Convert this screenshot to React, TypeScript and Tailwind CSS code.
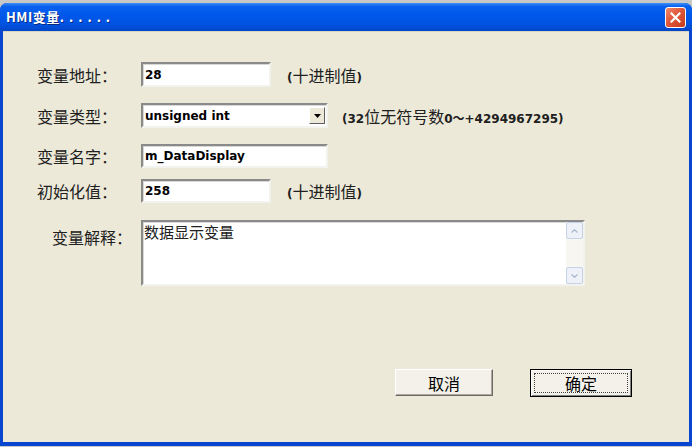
import React from "react";

const cjk = { fontFamily: '"SimSun","Noto Sans CJK SC","Liberation Sans",sans-serif' };
const bold = { fontFamily: '"DejaVu Sans","Liberation Sans","Noto Sans CJK SC",sans-serif' };

function Sunken({ className, children }: { className: string; children?: React.ReactNode }) {
  return (
    <div
      className={
        "bg-white border-2 border-t-[#8a8a8a] border-l-[#8a8a8a] border-b-[#f2f2ee] border-r-[#f2f2ee] shadow-[inset_1px_1px_0_#d8d8d4] " +
        className
      }
    >
      {children}
    </div>
  );
}

function Label({ text, className = "" }: { text: string; className?: string }) {
  return (
    <div className={"w-[104px] shrink-0 text-[16px] text-[#202020] " + className} style={cjk}>
      {text}
    </div>
  );
}

export default function App() {
  return (
    <div className="w-[692px] h-[447px] bg-[#c8c8c8] pt-[3px] overflow-hidden">
      <div className="w-[692px] h-[443px] flex flex-col rounded-t-[7px] overflow-hidden bg-[#0846d0]">
        {/* title bar */}
        <div className="h-[28px] shrink-0 flex items-center justify-between pl-[6px] pr-[6px] bg-[linear-gradient(to_bottom,#3d8ef7_0%,#0862ee_12%,#0058ea_40%,#0053e2_75%,#0046c8_100%)]">
          <div
            className="text-white text-[13px] font-bold tracking-[0.5px] [text-shadow:1px_1px_0_#0a2a80]"
            style={cjk}
          >
            HMI变量<span className="tracking-[5px]">......</span>
          </div>
          <div className="w-[21px] h-[21px] rounded-[3px] border border-white bg-[linear-gradient(135deg,#f08a6a_0%,#e0573a_45%,#c43b1c_100%)] flex items-center justify-center mt-[1px]">
            <svg width="11" height="11" viewBox="0 0 11 11">
              <path d="M1.5 1.5 L9.5 9.5 M9.5 1.5 L1.5 9.5" stroke="white" strokeWidth="2.2" strokeLinecap="square" />
            </svg>
          </div>
        </div>
        {/* body */}
        <div className="flex-1 mx-[3px] mb-[4px] bg-[#ece9d8] border-t border-[#d8d4c4] flex flex-col pl-[34px]">
          {/* row 1 */}
          <div className="flex items-center mt-[30px] h-[25px]">
            <Label text="变量地址：" />
            <Sunken className="w-[130px] h-[25px] flex items-center pl-[2px]">
              <span className="text-[12px] font-bold text-black" style={bold}>28</span>
            </Sunken>
            <span className="ml-[16px] text-[16px] text-[#202020]" style={cjk}>
              <b className="text-[12px]" style={bold}>(</b>十进制值<b className="text-[12px]" style={bold}>)</b>
            </span>
          </div>
          {/* row 2 */}
          <div className="flex items-center mt-[16px] h-[25px]">
            <Label text="变量类型：" />
            <Sunken className="w-[187px] h-[25px] flex items-center justify-between pl-[2px] pr-[1px]">
              <span className="text-[12px] font-bold text-black" style={bold}>unsigned int</span>
              <div className="w-[16px] h-[17px] bg-[#ece9d8] border border-t-white border-l-white border-b-[#606060] border-r-[#606060] flex items-center justify-center">
                <svg width="7" height="4" viewBox="0 0 7 4">
                  <path d="M0 0 H7 L3.5 4 Z" fill="black" />
                </svg>
              </div>
            </Sunken>
            <span className="ml-[14px] text-[16px] text-[#202020] whitespace-nowrap" style={cjk}>
              <b className="text-[12px]" style={bold}>(32</b>位无符号数<b className="text-[12px]" style={bold}>0～+4294967295)</b>
            </span>
          </div>
          {/* row 3 */}
          <div className="flex items-center mt-[16px] h-[24px]">
            <Label text="变量名字：" />
            <Sunken className="w-[187px] h-[24px] flex items-center pl-[2px]">
              <span className="text-[12px] font-bold text-black" style={bold}>m_DataDisplay</span>
            </Sunken>
          </div>
          {/* row 4 */}
          <div className="flex items-center mt-[11px] h-[24px]">
            <Label text="初始化值：" />
            <Sunken className="w-[130px] h-[24px] flex items-center pl-[2px]">
              <span className="text-[12px] font-bold text-black" style={bold}>258</span>
            </Sunken>
            <span className="ml-[16px] text-[16px] text-[#202020]" style={cjk}>
              <b className="text-[12px]" style={bold}>(</b>十进制值<b className="text-[12px]" style={bold}>)</b>
            </span>
          </div>
          {/* row 5 */}
          <div className="flex items-start mt-[17px]">
            <Label text="变量解释：" className="pl-[15px] mt-[5px]" />
            <Sunken className="w-[444px] h-[66px] flex">
              <div className="flex-1 text-[15px] leading-[18px] text-[#202020] pl-[1px] pt-[1px]" style={cjk}>
                数据显示变量
              </div>
              <div className="w-[17px] h-full bg-[#f7f6f1] flex flex-col justify-between">
                <div className="w-[17px] h-[17px] rounded-[2px] bg-[#eef1f8] border border-[#c6d2e8] flex items-center justify-center">
                  <svg width="7" height="4" viewBox="0 0 7 4">
                    <path d="M0.5 3.5 L3.5 0.8 L6.5 3.5" stroke="#a8b4c8" strokeWidth="1.2" fill="none" />
                  </svg>
                </div>
                <div className="w-[17px] h-[17px] rounded-[2px] bg-[#eef1f8] border border-[#c6d2e8] flex items-center justify-center">
                  <svg width="7" height="4" viewBox="0 0 7 4">
                    <path d="M0.5 0.5 L3.5 3.2 L6.5 0.5" stroke="#a8b4c8" strokeWidth="1.2" fill="none" />
                  </svg>
                </div>
              </div>
            </Sunken>
          </div>
          {/* buttons */}
          <div className="flex items-start mt-[83px] pl-[358px] gap-[37px]">
            <div className="w-[98px] h-[27px] bg-[#f3f1e9] border border-t-white border-l-white border-b-[#6a6a6a] border-r-[#6a6a6a] shadow-[inset_-1px_-1px_0_#aca899] flex items-center justify-center text-[16px] text-black" style={cjk}>
              取消
            </div>
            <div className="w-[102px] h-[28px] border border-black bg-[#f3f1e9] shadow-[inset_1px_1px_0_#fff,inset_-1px_-1px_0_#808080] p-[3px]">
              <div className="w-full h-full border border-dotted border-[#404040] flex items-center justify-center text-[16px] text-black" style={cjk}>
                确定
              </div>
            </div>
          </div>
        </div>
      </div>
    </div>
  );
}
